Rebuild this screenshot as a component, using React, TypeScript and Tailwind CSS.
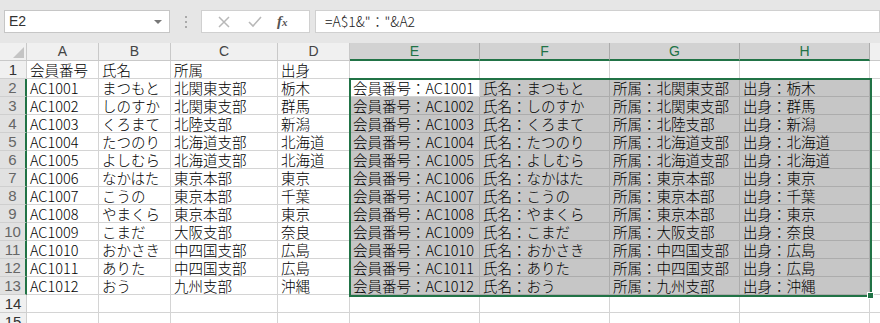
const members = [
  ["AC1001", "まつもと", "北関東支部", "栃木"],
  ["AC1002", "しのすか", "北関東支部", "群馬"],
  ["AC1003", "くろまて", "北陸支部", "新潟"],
  ["AC1004", "たつのり", "北海道支部", "北海道"],
  ["AC1005", "よしむら", "北海道支部", "北海道"],
  ["AC1006", "なかはた", "東京本部", "東京"],
  ["AC1007", "こうの", "東京本部", "千葉"],
  ["AC1008", "やまくら", "東京本部", "東京"],
  ["AC1009", "こまだ", "大阪支部", "奈良"],
  ["AC1010", "おかさき", "中四国支部", "広島"],
  ["AC1011", "ありた", "中四国支部", "広島"],
  ["AC1012", "おう", "九州支部", "沖縄"],
];

const headers = ["会員番号", "氏名", "所属", "出身"];
const cols = ["A", "B", "C", "D", "E", "F", "G", "H"];

const cellFont = {
  fontFamily: '"Noto Sans CJK JP", "Noto Sans", sans-serif',
};

const App = () => {
  // rows 1..15; row 1 is the header row of the source table
  const rows: string[][] = [];
  rows.push([...headers, "", "", "", ""]);
  members.forEach((m) => {
    rows.push([...m, ...m.map((v, i) => `${headers[i]}：${v}`)]);
  });
  rows.push(["", "", "", "", "", "", "", ""]);
  rows.push(["", "", "", "", "", "", "", ""]);

  return (
    <div className="w-[880px] h-[323px] overflow-hidden bg-white" style={cellFont}>
      {/* formula bar */}
      <div className="h-[43px] bg-[#e6e6e6] flex items-start pt-[10px] pl-[4px] gap-0">
        <div className="w-[166px] h-[23px] bg-white border border-[#c6c6c6] flex items-center justify-between px-[4px]">
          <span className="text-[14px] text-[#333]" style={{ fontFamily: '"Liberation Sans", sans-serif' }}>
            E2
          </span>
          <svg width="10" height="6" viewBox="0 0 10 6" className="mr-[2px]">
            <path d="M1 1 L5 5 L9 1 Z" fill="#777" />
          </svg>
        </div>
        <div className="w-[31px] h-[23px] flex items-center justify-center">
          <div className="flex flex-col gap-[3px]">
            <span className="w-[2px] h-[2px] bg-[#aaa]" />
            <span className="w-[2px] h-[2px] bg-[#aaa]" />
            <span className="w-[2px] h-[2px] bg-[#aaa]" />
          </div>
        </div>
        <div className="w-[109px] h-[23px] bg-white border border-[#d0d0d0] flex items-center">
          <svg width="14" height="14" viewBox="0 0 14 14" className="ml-[15px]">
            <path d="M2 2 L12 12 M12 2 L2 12" stroke="#b8b8b8" strokeWidth="1.5" />
          </svg>
          <svg width="16" height="14" viewBox="0 0 16 14" className="ml-[16px]">
            <path d="M2 7 L6 11 L14 2" stroke="#b8b8b8" strokeWidth="1.6" fill="none" />
          </svg>
          <span
            className="ml-[14px] italic text-[15px] font-bold text-[#555]"
            style={{ fontFamily: '"Liberation Serif", serif' }}
          >
            f<span className="text-[11px]">x</span>
          </span>
        </div>
        <div className="ml-[5px] flex-1 h-[23px] bg-white border border-[#d0d0d0] flex items-center pl-[9px] text-[14px] font-light text-[#222]">
          =A$1&"："&A2
        </div>
      </div>

      {/* sheet */}
      <div className="relative">
        <div className="grid grid-cols-[27px_72px_72px_107px_72px_130px_130px_130px_130px_10px]">
          {/* column header row */}
          <div className="h-[18px] bg-[#f0f0f0] border-r border-b border-[#c9c9c9] flex items-end justify-end pr-[2px] pb-[2px]">
            <svg width="11" height="11" viewBox="0 0 11 11">
              <path d="M11 0 L11 11 L0 11 Z" fill="#c4c4c4" />
            </svg>
          </div>
          {cols.map((c, i) => {
            const sel = i >= 4;
            return (
              <div
                key={c}
                className={
                  sel
                    ? "h-[18px] bg-[#d2d2d2] border-r border-r-[#ababab] border-b-2 border-b-[#217346] flex items-center justify-center text-[14px] text-[#217346]"
                    : "h-[18px] bg-[#f0f0f0] border-r border-b border-[#c9c9c9] flex items-center justify-center text-[14px] text-[#444]"
                }
                style={{ fontFamily: '"Liberation Sans", sans-serif' }}
              >
                {c}
              </div>
            );
          })}
          <div className="h-[18px] bg-[#f0f0f0] border-b border-[#c9c9c9]" />

          {rows.map((r, ri) => {
            const rowNo = ri + 1;
            const rowSel = rowNo >= 2 && rowNo <= 13;
            return [
              <div
                key={`h${rowNo}`}
                className={
                  rowSel
                    ? "h-[18px] bg-[#e1e1e1] border-b border-[#cfcfcf] border-r-2 border-r-[#217346] flex items-center justify-center text-[15px] text-[#666] leading-[17px]"
                    : "h-[18px] bg-[#f0f0f0] border-b border-r border-[#cfcfcf] flex items-center justify-center text-[15px] text-[#333] leading-[17px]"
                }
                style={{ fontFamily: '"Liberation Sans", sans-serif' }}
              >
                {rowNo}
              </div>,
              ...r.map((v, ci) => {
                const sel = rowSel && ci >= 4;
                const active = rowNo === 2 && ci === 4;
                const bg = sel && !active ? "bg-[#c6c6c6] border-[#acacac]" : "bg-white border-[#d4d4d4]";
                return (
                  <div
                    key={`c${rowNo}-${ci}`}
                    className={`h-[18px] ${bg} border-r border-b flex items-center pl-[3px] text-[14.5px] leading-[17px] font-light text-black whitespace-nowrap`}
                  >
                    {v}
                  </div>
                );
              }),
              <div key={`e${rowNo}`} className="h-[18px] bg-white border-b border-[#d4d4d4]" />,
            ];
          })}
        </div>

        {/* selection border E2:H13 */}
        <div className="absolute left-[349px] top-[35px] w-[523px] h-[219px] border-2 border-[#217346] pointer-events-none" />
        <div className="absolute left-[867px] top-[249px] w-[7px] h-[7px] bg-[#217346] border border-white" />
      </div>
    </div>
  );
};

export default App;
